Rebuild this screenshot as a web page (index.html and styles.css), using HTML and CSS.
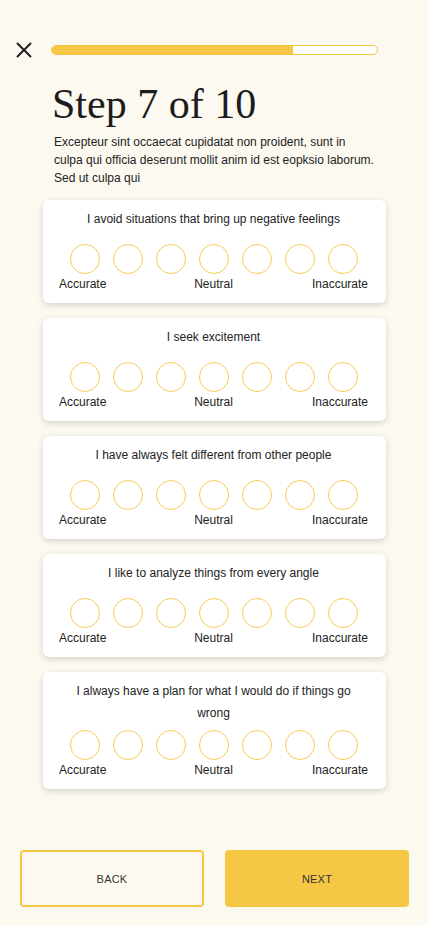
FILE: index.html
```html
<!DOCTYPE html>
<html>
<head>
<meta charset="utf-8">
<link rel="stylesheet" href="styles.css">
</head>
<body>
<div class="page">
  <header class="top">
    <button class="close" aria-label="Close">
      <svg width="16" height="16" viewBox="0 0 16 16"><path d="M1 1 L15 15 M15 1 L1 15" stroke="#1f1f1f" stroke-width="2" fill="none"/></svg>
    </button>
    <div class="progress"><div class="fill" style="width:74.3%"></div></div>
  </header>
  <main class="main">
    <div class="intro">
      <h1 class="title">Step 7 of 10</h1>
      <p class="lead">Excepteur sint occaecat cupidatat non proident, sunt in culpa qui officia deserunt mollit anim id est eopksio laborum. Sed ut culpa qui</p>
    </div>
    <div class="cards">
      <section class="card">
        <p class="q">I avoid situations that bring up negative feelings</p>
        <div class="scale"><span></span><span></span><span></span><span></span><span></span><span></span><span></span></div>
        <div class="labels"><span>Accurate</span><span>Neutral</span><span>Inaccurate</span></div>
      </section>
      <section class="card">
        <p class="q">I seek excitement</p>
        <div class="scale"><span></span><span></span><span></span><span></span><span></span><span></span><span></span></div>
        <div class="labels"><span>Accurate</span><span>Neutral</span><span>Inaccurate</span></div>
      </section>
      <section class="card">
        <p class="q">I have always felt different from other people</p>
        <div class="scale"><span></span><span></span><span></span><span></span><span></span><span></span><span></span></div>
        <div class="labels"><span>Accurate</span><span>Neutral</span><span>Inaccurate</span></div>
      </section>
      <section class="card">
        <p class="q">I like to analyze things from every angle</p>
        <div class="scale"><span></span><span></span><span></span><span></span><span></span><span></span><span></span></div>
        <div class="labels"><span>Accurate</span><span>Neutral</span><span>Inaccurate</span></div>
      </section>
      <section class="card">
        <p class="q">I always have a plan for what I would do if things go wrong</p>
        <div class="scale"><span></span><span></span><span></span><span></span><span></span><span></span><span></span></div>
        <div class="labels"><span>Accurate</span><span>Neutral</span><span>Inaccurate</span></div>
      </section>
    </div>
  </main>
  <footer class="actions">
    <button class="btn btn-back">BACK</button>
    <button class="btn btn-next">NEXT</button>
  </footer>
</div>
</body>
</html>
```
FILE: styles.css
```css
* { box-sizing: border-box; }
html, body { margin: 0; padding: 0; }
body {
  background: #fcf9f1;
  font-family: "Liberation Sans", Arial, sans-serif;
  color: #222;
}
.page {
  height: 926px;
  display: flex;
  flex-direction: column;
}
.top {
  display: flex;
  align-items: center;
  padding: 42px 0 0 16px;
  height: 58px;
}
.close {
  width: 16px;
  height: 16px;
  padding: 0;
  border: 0;
  background: none;
  display: flex;
  margin-right: 19px;
}
.progress {
  width: 327px;
  height: 10px;
  border: 1px solid #f6c745;
  border-radius: 6px;
  background: #fff;
  overflow: hidden;
}
.fill {
  height: 100%;
  background: #f6c745;
}
.main {
  flex: 1;
  padding: 0 42px 0 43px;
}
.intro {
  padding-left: 9px;
}
.title {
  margin: 22px 0 0;
  font-family: "Liberation Serif", "Times New Roman", serif;
  font-weight: 400;
  font-size: 42px;
  line-height: 48px;
  color: #1c1c1c;
}
.lead {
  margin: 5px 0 0 2px;
  font-size: 12px;
  line-height: 18px;
  color: #222;
  width: 321px;
}
.cards {
  margin-top: 13px;
  display: flex;
  flex-direction: column;
  gap: 15px;
}
.card {
  background: #fff;
  border-radius: 6px;
  box-shadow: 0 2px 6px rgba(0, 0, 0, 0.16);
  padding: 8px 18px 12px 16px;
}
.q {
  margin: 0;
  padding: 0 14px;
  min-height: 30px;
  text-align: center;
  font-size: 12px;
  line-height: 22px;
  color: #222;
}
.scale {
  margin-top: 6px;
  display: flex;
  justify-content: center;
  gap: 13px;
}
.scale span {
  width: 30px;
  height: 30px;
  border: 1px solid #f7cb55;
  border-radius: 50%;
}
.labels {
  margin-top: 3px;
  display: grid;
  grid-template-columns: 1fr auto 1fr;
  font-size: 12px;
  line-height: 14px;
  color: #222;
}
.labels span:last-child {
  text-align: right;
}
.actions {
  display: flex;
  gap: 21px;
  padding: 0 19px 19px 20px;
}
.btn {
  flex: none;
  width: 184px;
  height: 57px;
  margin: 0;
  border-radius: 4px;
  font-family: "Liberation Sans", Arial, sans-serif;
  font-size: 11px;
  color: #333;
  letter-spacing: 0.2px;
}
.btn-back {
  background: transparent;
  border: 2px solid #f6c745;
}
.btn-next {
  background: #f6c745;
  border: 0;
}
```
